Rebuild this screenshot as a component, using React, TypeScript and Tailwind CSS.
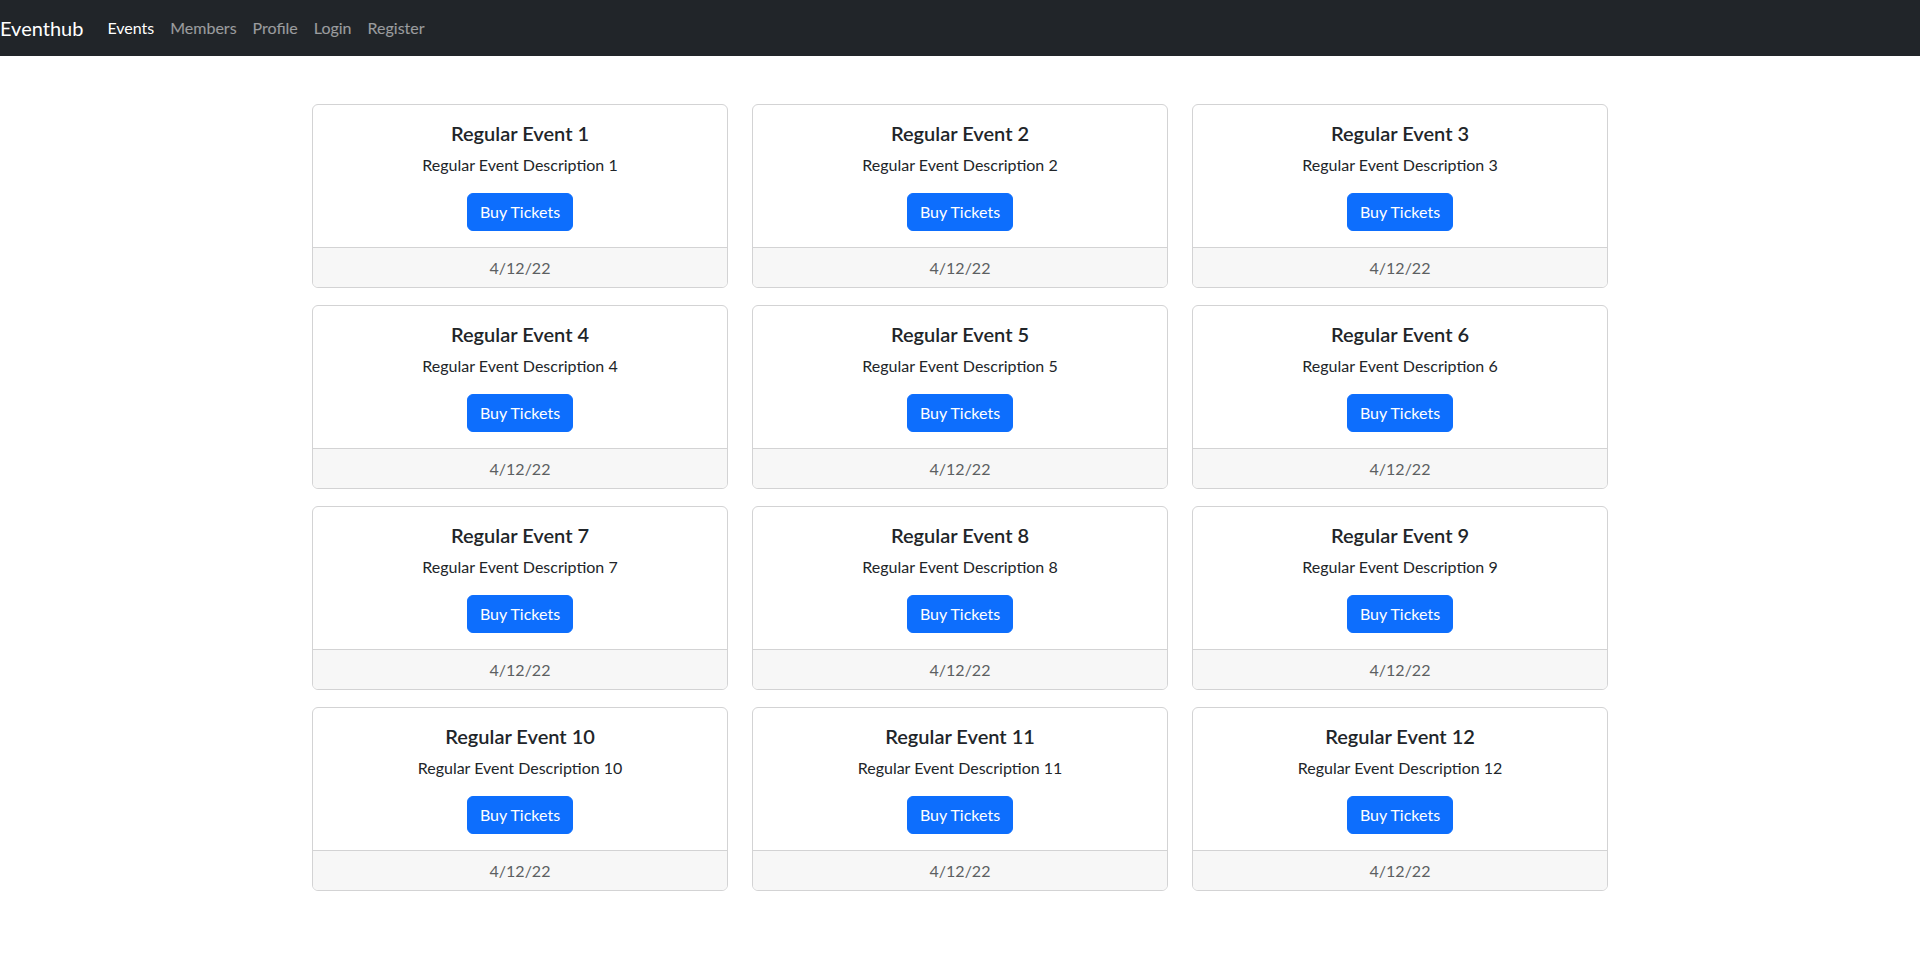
export default function App() {
  const events = Array.from({ length: 12 }, (_, i) => i + 1)

  return (
    <div className="min-h-screen bg-white text-[#212529] font-['Lato','Noto_Sans',sans-serif]">
      <nav className="h-14 bg-[#212529] flex items-center">
        <a href="#" className="text-white text-xl mr-4 leading-[30px]">Eventhub</a>
        <ul className="flex items-center">
          <li><a href="#" className="block px-2 py-2 text-white">Events</a></li>
          <li><a href="#" className="block px-2 py-2 text-white/55">Members</a></li>
          <li><a href="#" className="block px-2 py-2 text-white/55">Profile</a></li>
          <li><a href="#" className="block px-2 py-2 text-white/55">Login</a></li>
          <li><a href="#" className="block px-2 py-2 text-white/55">Register</a></li>
        </ul>
      </nav>

      <main className="w-[1296px] mx-auto pt-12">
        <div className="grid grid-cols-3 gap-x-6 gap-y-[17px]">
          {events.map(n => (
            <div key={n} className="border border-[#d3d3d4] rounded-md overflow-hidden text-center">
              <div className="p-4">
                <h5 className="text-xl font-semibold leading-6 mb-2">Regular Event {n}</h5>
                <p className="leading-6 mb-4">Regular Event Description {n}</p>
                <div className="flex justify-center">
                  <button className="h-[38px] bg-[#0d6efd] border border-[#0d6efd] text-white rounded-md px-3 leading-6">Buy Tickets</button>
                </div>
              </div>
              <div className="border-t border-[#d3d3d4] bg-[#f7f7f7] py-[7.5px] leading-6 text-[#5c5f62]">4/12/22</div>
            </div>
          ))}
        </div>
      </main>
    </div>
  )
}
